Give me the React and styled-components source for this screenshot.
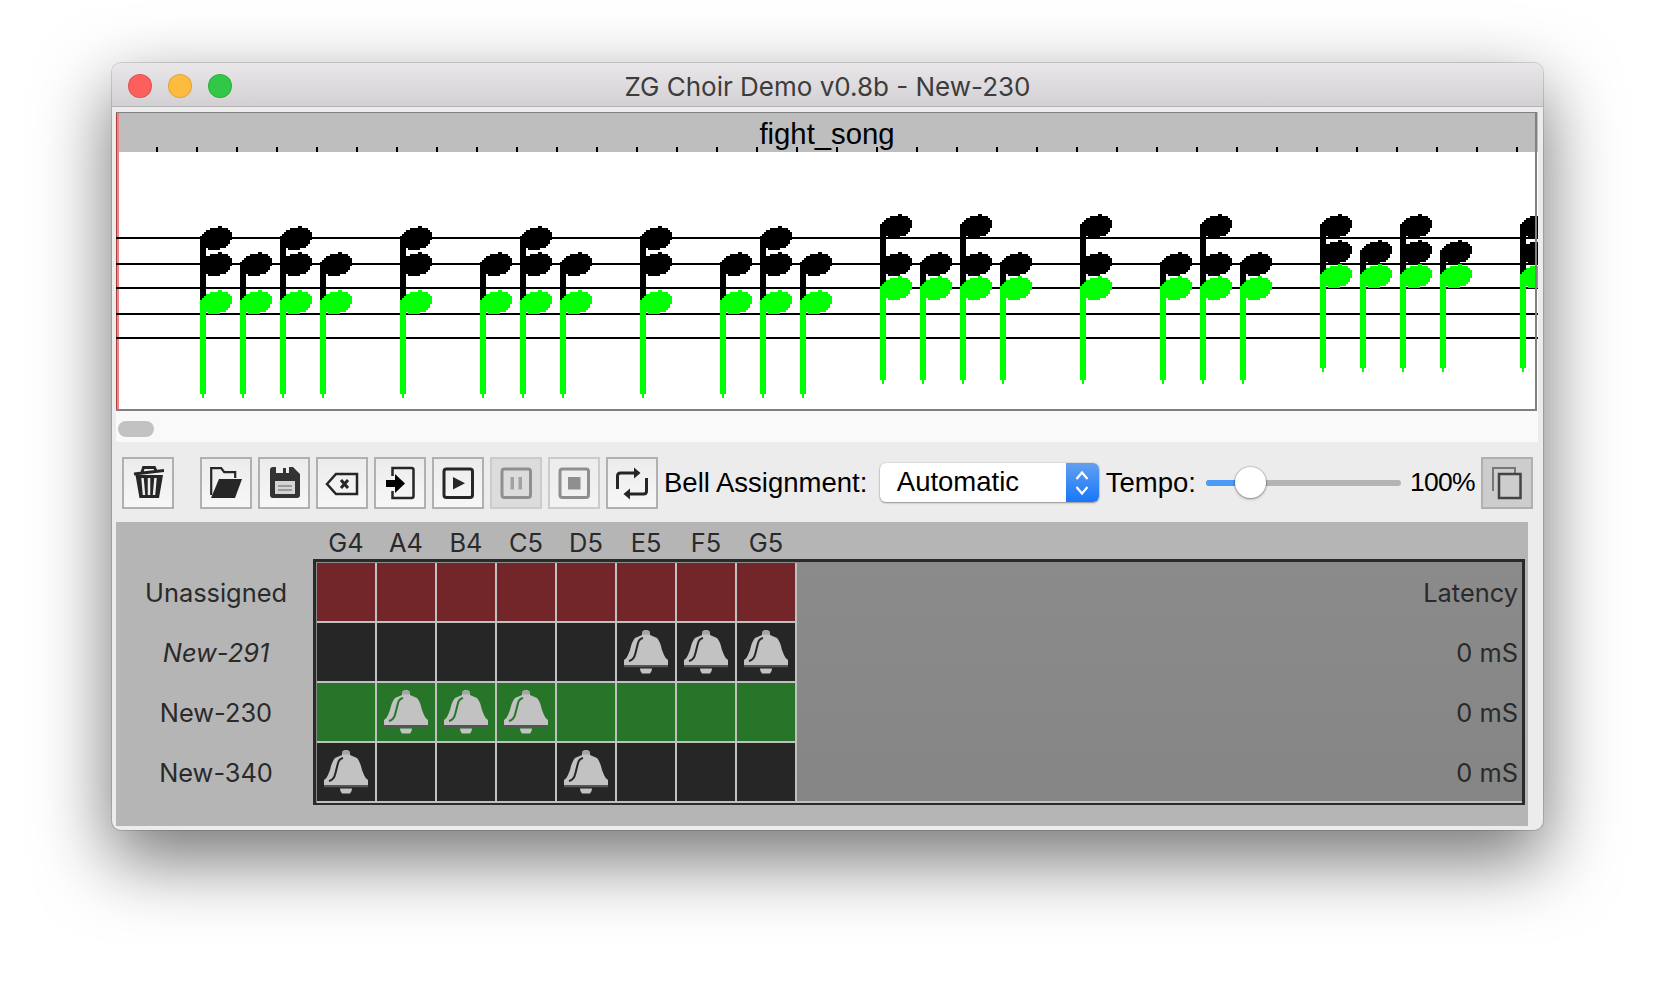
import React from 'react'
import styled, {createGlobalStyle} from 'styled-components'

const GlobalStyle = createGlobalStyle`
  html, body {
    margin: 0;
    background: #fff;
  }
`

// pixel rows of a note head: [y, from, to], 32 x 24
const headRows = [
  [0, 18, 22], [2, 10, 28], [4, 6, 30], [6, 4, 32], [8, 2, 32], [10, 0, 32],
  [12, 0, 32], [14, 0, 30], [16, 2, 30], [18, 2, 28], [20, 4, 26], [22, 8, 20],
]
const headPath = (x, y) =>
  headRows.map(([r, a, b]) => `M${x + a} ${y + r}h${b - a}v2h${a - b}z`).join('')

// stem x, second upper head or not, and the pitch block it is in
const pitchA = {green: 290, upper: 226, lower: 252, bottom: 394}
const pitchB = {green: 276, upper: 214, lower: 252, bottom: 380}
const pitchC = {green: 264, upper: 214, lower: 240, bottom: 368}
const chords = [
  ...[[200, 1], [240, 0], [280, 1], [320, 0], [400, 1], [480, 0], [520, 1], [560, 0], [640, 1], [720, 0], [760, 1], [800, 0]]
    .map(([x, two]) => ({x, two, ...pitchA})),
  ...[[880, 1], [920, 0], [960, 1], [1000, 0], [1080, 1], [1160, 0], [1200, 1], [1240, 0]]
    .map(([x, two]) => ({x, two, ...pitchB})),
  ...[[1320, 1], [1360, 0], [1400, 1], [1440, 0], [1520, 1]]
    .map(([x, two]) => ({x, two, ...pitchC})),
]
const staffLines = [238, 264, 288, 314, 338]

const columns = ['G4', 'A4', 'B4', 'C5', 'D5', 'E5', 'F5', 'G5']
const players = [
  {name: 'Unassigned', latency: 'Latency', tone: '#72262a', bells: []},
  {name: 'New-291', latency: '0 mS', tone: '#262626', bells: [5, 6, 7], italic: true},
  {name: 'New-230', latency: '0 mS', tone: '#277528', bells: [1, 2, 3]},
  {name: 'New-340', latency: '0 mS', tone: '#262626', bells: [0, 4]},
]

const Score = () => (
  <ScoreSvg viewBox="116 152 1422 259" shapeRendering="crispEdges">
    {staffLines.map(y => <rect key={y} x="116" y={y - 1} width="1422" height="2" fill="#000"/>)}
    {chords.map(c => {
      const top = c.two ? c.upper : c.lower
      return (
        <g key={c.x}>
          <rect x={c.x} y={top + 14} width="6" height={c.green - top} fill="#000"/>
          <path d={headPath(c.x, c.lower) + (c.two ? headPath(c.x, c.upper) : '')} fill="#000"/>
          <rect x={c.x} y={c.green + 14} width="6" height={c.bottom - c.green - 14} fill="#0f0"/>
          <rect x={c.x + 2} y={c.bottom} width="2" height="4" fill="#0f0"/>
          <path d={headPath(c.x, c.green)} fill="#0f0"/>
        </g>
      )
    })}
  </ScoreSvg>
)

const TrashIcon = () => (
  <Icon viewBox="0 0 52 52">
    <path d="M12 17L42 13.500M20 15l1.500-4.500h11L34 14" fill="none" stroke="currentColor" strokeWidth="2.800"/>
    <path d="M13.500 18H41l-4 23H17.500z" fill="currentColor"/>
    <path d="M20.500 21l1.500 17M27 21v17M33.500 21L32 38" stroke="#eee" strokeWidth="2.500"/>
  </Icon>
)
const FolderIcon = () => (
  <Icon viewBox="0 0 52 52">
    <path d="M11.200 38V11.200h10l3 4h11V21" fill="none" stroke="currentColor" strokeWidth="2.200"/>
    <path d="M19 22h23l-7 19H11z" fill="currentColor"/>
  </Icon>
)
const SaveIcon = () => (
  <Icon viewBox="0 0 52 52">
    <path d="M12 13q0-3 3-3h3v6h13v-6h4l7 7v21q0 3-3 3H15q-3 0-3-3z" fill="#333"/>
    <rect x="25" y="11" width="3" height="5" fill="#333"/>
    <rect x="17" y="24" width="20" height="13" fill="#d4d4d4"/>
    <path d="M20 29h14M20 33h14" stroke="#888" strokeWidth="1.500"/>
  </Icon>
)
const BackspaceIcon = () => (
  <Icon viewBox="0 0 52 52">
    <path d="M11 27l9-10h21v20H20z" fill="none" stroke="currentColor" strokeWidth="2.500"/>
    <path d="M25 23l7 8M32 23l-7 8" stroke="currentColor" strokeWidth="3"/>
  </Icon>
)
const SignInIcon = () => (
  <Icon viewBox="0 0 52 52">
    <path d="M18.500 19v-8h19q2 0 2 2v26q0 2-2 2h-19v-7" fill="none" stroke="currentColor" strokeWidth="2.500"/>
    <path d="M12 23h9v-6l10 9.500-10 9.500v-6h-9z" fill="#000"/>
  </Icon>
)
const PlayIcon = () => (
  <Icon viewBox="0 0 52 52">
    <rect x="12" y="12" width="28.500" height="28.500" rx="2.500" fill="none" stroke="currentColor" strokeWidth="3"/>
    <path d="M21 20l12 6.300-12 6.300z" fill="currentColor"/>
  </Icon>
)
const PauseIcon = () => (
  <Icon viewBox="0 0 52 52">
    <rect x="12" y="12" width="28.500" height="28.500" rx="2.500" fill="none" stroke="currentColor" strokeWidth="3"/>
    <path d="M20.500 20h3.500v12.500h-3.500zM28.500 20h3.500v12.500h-3.500z" fill="currentColor" opacity=".75"/>
  </Icon>
)
const StopIcon = () => (
  <Icon viewBox="0 0 52 52">
    <rect x="12" y="12" width="28.500" height="28.500" rx="2.500" fill="none" stroke="currentColor" strokeWidth="3"/>
    <rect x="20" y="20" width="12.500" height="12.500" fill="currentColor"/>
  </Icon>
)
const RepeatIcon = () => (
  <Icon viewBox="0 0 52 52">
    <path d="M11.500 32V19q0-3 3-3H29M40.500 21v13q0 3-3 3H23" fill="none" stroke="currentColor" strokeWidth="3"/>
    <path d="M28 10.500l6.500 5.500-6.500 5.500zM24 31.500L17.500 37l6.500 5.500z" fill="currentColor"/>
  </Icon>
)
const CopyIcon = () => (
  <Icon viewBox="0 0 52 52">
    <path d="M12 34V11h22v5" fill="none" stroke="#777" strokeWidth="2"/>
    <rect x="18" y="17" width="21.500" height="24" fill="none" stroke="#444" strokeWidth="2.500"/>
  </Icon>
)

const Bell = ({tone}) => (
  <BellSvg viewBox="0 0 58 58">
    <path d="M25 12q0-5 4-5t4 5l7 3q3 3 5 12l2 5q1 3 4 5v5H7v-5q3-2 4-5l2-5q2-9 5-12z" fill="#c2c2c2"/>
    <path d="M12 38q5-1 6.500-8l2.500-10q1-4 5-5" fill="none" stroke={tone} strokeWidth="2"/>
    <rect x="25" y="7.500" width="8" height="4" rx="2" fill="#a5a5a5"/>
    <rect x="7" y="42" width="44" height="2.200" fill="#555"/>
    <path d="M23 45.500h12q0 3-2 5h-8q-2-2-2-5z" fill="#c2c2c2"/>
  </BellSvg>
)

const App = () => (
  <Page>
    <GlobalStyle/>
    <Window>
      <TitleBar>
        <Lights>
          <Light $color="#fc5f5c"/>
          <Light $color="#fdbc40"/>
          <Light $color="#33c748"/>
        </Lights>
        ZG Choir Demo v0.8b - New-230
      </TitleBar>
      <Content>
        <ScorePanel>
          <ScoreHeader>fight_song</ScoreHeader>
          <Score/>
        </ScorePanel>
        <ScrollTrack><ScrollThumb/></ScrollTrack>
        <Toolbar>
          <ToolButton $spaced><TrashIcon/></ToolButton>
          <ToolButton><FolderIcon/></ToolButton>
          <ToolButton><SaveIcon/></ToolButton>
          <ToolButton><BackspaceIcon/></ToolButton>
          <ToolButton><SignInIcon/></ToolButton>
          <ToolButton><PlayIcon/></ToolButton>
          <ToolButton $state="pressed"><PauseIcon/></ToolButton>
          <ToolButton $state="disabled"><StopIcon/></ToolButton>
          <ToolButton><RepeatIcon/></ToolButton>
          <ToolLabel $left={0}>Bell Assignment:</ToolLabel>
          <SelectBox>
            <SelectValue>Automatic</SelectValue>
            <Stepper>
              <svg width="16" height="28" viewBox="0 0 16 28" fill="none" stroke="#fff" strokeWidth="2.200">
                <path d="M2.500 10L8 3.500 13.500 10M2.500 18L8 24.500 13.500 18"/>
              </svg>
            </Stepper>
          </SelectBox>
          <ToolLabel $left={1}>Tempo:</ToolLabel>
          <Slider>
            <SliderFill/>
            <SliderThumb/>
          </Slider>
          <PercentLabel $left={3}>100%</PercentLabel>
          <CopyButton $state="active"><CopyIcon/></CopyButton>
        </Toolbar>
        <AssignPanel>
          <ColumnHeads>
            {columns.map(c => <ColumnHead key={c}>{c}</ColumnHead>)}
          </ColumnHeads>
          <AssignBody>
            <RowLabels>
              {players.map(p => <RowLabel key={p.name} $italic={p.italic}>{p.name}</RowLabel>)}
            </RowLabels>
            <Board>
              {players.map(p => (
                <BoardRow key={p.name}>
                  {columns.map((c, i) => (
                    <Cell key={c} $tone={p.tone}>
                      {p.bells.includes(i) && <Bell tone={p.tone}/>}
                    </Cell>
                  ))}
                  <Latency>{p.latency}</Latency>
                </BoardRow>
              ))}
            </Board>
          </AssignBody>
        </AssignPanel>
      </Content>
    </Window>
  </Page>
)

const Page = styled.div`
  box-sizing: border-box;
  height: 990px;
  padding: 63px 0 0 112px;
  overflow: hidden;
`

const Window = styled.div`
  box-sizing: border-box;
  width: 1431px;
  height: 767px;
  border-radius: 9px;
  background: #ececec;
  overflow: hidden;
  box-shadow: 0 0 0 1px rgba(0,0,0,.14), 0 28px 72px 2px rgba(0,0,0,.54);
`

const TitleBar = styled.div`
  position: relative;
  box-sizing: border-box;
  height: 44px;
  padding-top: 4px;
  display: flex;
  align-items: center;
  justify-content: center;
  background: linear-gradient(#e9e7e9, #d2d0d2);
  border-bottom: 1px solid #b4b4b4;
  font: 26px Inter, "Liberation Sans", sans-serif;
  color: #3c3c3c;
`

const Lights = styled.div`
  position: absolute;
  left: 16px;
  top: 11px;
  display: flex;
  gap: 16px;
`

const Light = styled.span`
  width: 24px;
  height: 24px;
  border-radius: 50%;
  background: ${p => p.$color};
  box-shadow: inset 0 0 0 1px rgba(0,0,0,.12);
`

const Content = styled.div`
  padding: 5px 5px 0 4px;
  display: flex;
  flex-direction: column;
`

const ScorePanel = styled.div`
  position: relative;
  height: 299px;
  background: #fff;
  overflow: hidden;
  &::before {
    content: "";
    position: absolute;
    left: 0;
    top: 0;
    bottom: 0;
    width: 3px;
    background: linear-gradient(90deg, #a04040 1px, #f58080 1px);
  }
  &::after {
    content: "";
    position: absolute;
    left: 0;
    right: 1px;
    top: 0;
    bottom: 0;
    border: solid #808080;
    border-width: 1px 2px 2px 0;
  }
`

const ScoreHeader = styled.div`
  box-sizing: border-box;
  height: 40px;
  padding-top: 4px;
  text-align: center;
  background: repeating-linear-gradient(90deg, #000 0 2px, transparent 2px 40px) 0 100% / 100% 5px no-repeat, #bebebe;
  font: 29.300px/36px "Liberation Sans", sans-serif;
  color: #000;
`

const ScoreSvg = styled.svg`
  position: relative;
  display: block;
  width: 1422px;
  height: 259px;
`

const ScrollTrack = styled.div`
  height: 31px;
  padding: 10px 2px 0;
  box-sizing: border-box;
  background: #f9f9f9;
`

const ScrollThumb = styled.div`
  width: 36px;
  height: 16px;
  border-radius: 8px;
  background: #c2c2c2;
`

const Toolbar = styled.div`
  box-sizing: border-box;
  height: 80px;
  padding: 1px 0 0 6px;
  display: flex;
  align-items: center;
  gap: 6px;
`

const buttonTones = {
  normal: 'linear-gradient(#ececec, #f7f7f7)',
  pressed: '#dcdcdc',
  disabled: 'linear-gradient(#ececec, #f3f3f3)',
  active: '#cdcdcd',
}

const ToolButton = styled.div`
  box-sizing: border-box;
  width: 52px;
  height: 52px;
  flex: none;
  margin-right: ${p => (p.$spaced ? 20 : 0)}px;
  border: 2px solid ${p => (p.$state === 'disabled' || p.$state === 'pressed' ? '#cbcbcb' : '#b0b0b0')};
  background: ${p => buttonTones[p.$state || 'normal']};
  color: ${p => (p.$state === 'disabled' || p.$state === 'pressed' ? '#8f8f8f' : '#262626')};
`

const CopyButton = styled(ToolButton)`
  border-color: #b0b0b0;
`

const Icon = styled.svg`
  display: block;
  width: 52px;
  height: 52px;
  margin: -2px;
  filter: blur(.4px);
`

const ToolLabel = styled.span`
  margin-left: ${p => p.$left}px;
  font: 27.500px "Liberation Sans", sans-serif;
  color: #000;
  white-space: nowrap;
`

const PercentLabel = styled(ToolLabel)`
  font-size: 26.500px;
  letter-spacing: -.7px;
`

const SelectBox = styled.div`
  box-sizing: border-box;
  width: 219px;
  height: 39px;
  flex: none;
  margin-left: 6.500px;
  display: flex;
  border-radius: 6px;
  background: #fff;
  overflow: hidden;
  box-shadow: 0 0 0 1px rgba(0,0,0,.06), 0 1px 2px rgba(0,0,0,.35);
`

const SelectValue = styled.span`
  flex: 1;
  padding-left: 17px;
  font: 27.500px/37px "Liberation Sans", sans-serif;
  color: #000;
`

const Stepper = styled.div`
  width: 33px;
  display: flex;
  align-items: center;
  justify-content: center;
  background: linear-gradient(#639ff0, #1877f8);
`

const Slider = styled.div`
  position: relative;
  flex: none;
  width: 195px;
  height: 6px;
  margin-left: 4px;
  border-radius: 3px;
  background: #b4b4b4;
`

const SliderFill = styled.div`
  width: 44px;
  height: 100%;
  border-radius: 3px 0 0 3px;
  background: #4a9bf5;
`

const SliderThumb = styled.div`
  position: absolute;
  left: 29px;
  top: -13px;
  width: 31px;
  height: 31px;
  border-radius: 50%;
  background: #fff;
  box-shadow: 0 0 0 1px rgba(0,0,0,.1), 0 1px 3px rgba(0,0,0,.4);
`

const AssignPanel = styled.div`
  width: 1412px;
  height: 304px;
  background: #b5b5b5;
  font: 25.400px Inter, "Liberation Sans", sans-serif;
  color: #2a2a2a;
`

const ColumnHeads = styled.div`
  height: 37px;
  padding: 5px 0 0 200px;
  box-sizing: border-box;
  display: flex;
`

const ColumnHead = styled.div`
  width: 60px;
  text-align: center;
`

const AssignBody = styled.div`
  display: flex;
`

const RowLabels = styled.div`
  width: 197px;
  padding: 4px 0 0 3px;
  box-sizing: border-box;
`

const RowLabel = styled.div`
  height: 60px;
  line-height: 60px;
  text-align: center;
  font-style: ${p => (p.$italic ? 'italic' : 'normal')};
`

const Board = styled.div`
  box-sizing: border-box;
  width: 1212px;
  height: 246px;
  padding: 1px 0 0 1px;
  border: solid #2a2a2a;
  border-width: 3px 3px 2px 3px;
  background: linear-gradient(#8b8b8b, #858585);
`

const BoardRow = styled.div`
  display: flex;
  height: 60px;
  &:last-child > div:last-child {
    border-bottom: 2px solid #c0c0c0;
  }
`

const Cell = styled.div`
  box-sizing: border-box;
  width: 60px;
  height: 60px;
  flex: none;
  border: solid #c0c0c0;
  border-width: 0 2px 2px 0;
  background: ${p => p.$tone};
`

const BellSvg = styled.svg`
  display: block;
  width: 58px;
  height: 58px;
`

const Latency = styled.div`
  flex: 1;
  box-sizing: border-box;
  height: 60px;
  padding-right: 4px;
  line-height: 60px;
  text-align: right;
`

export default App
